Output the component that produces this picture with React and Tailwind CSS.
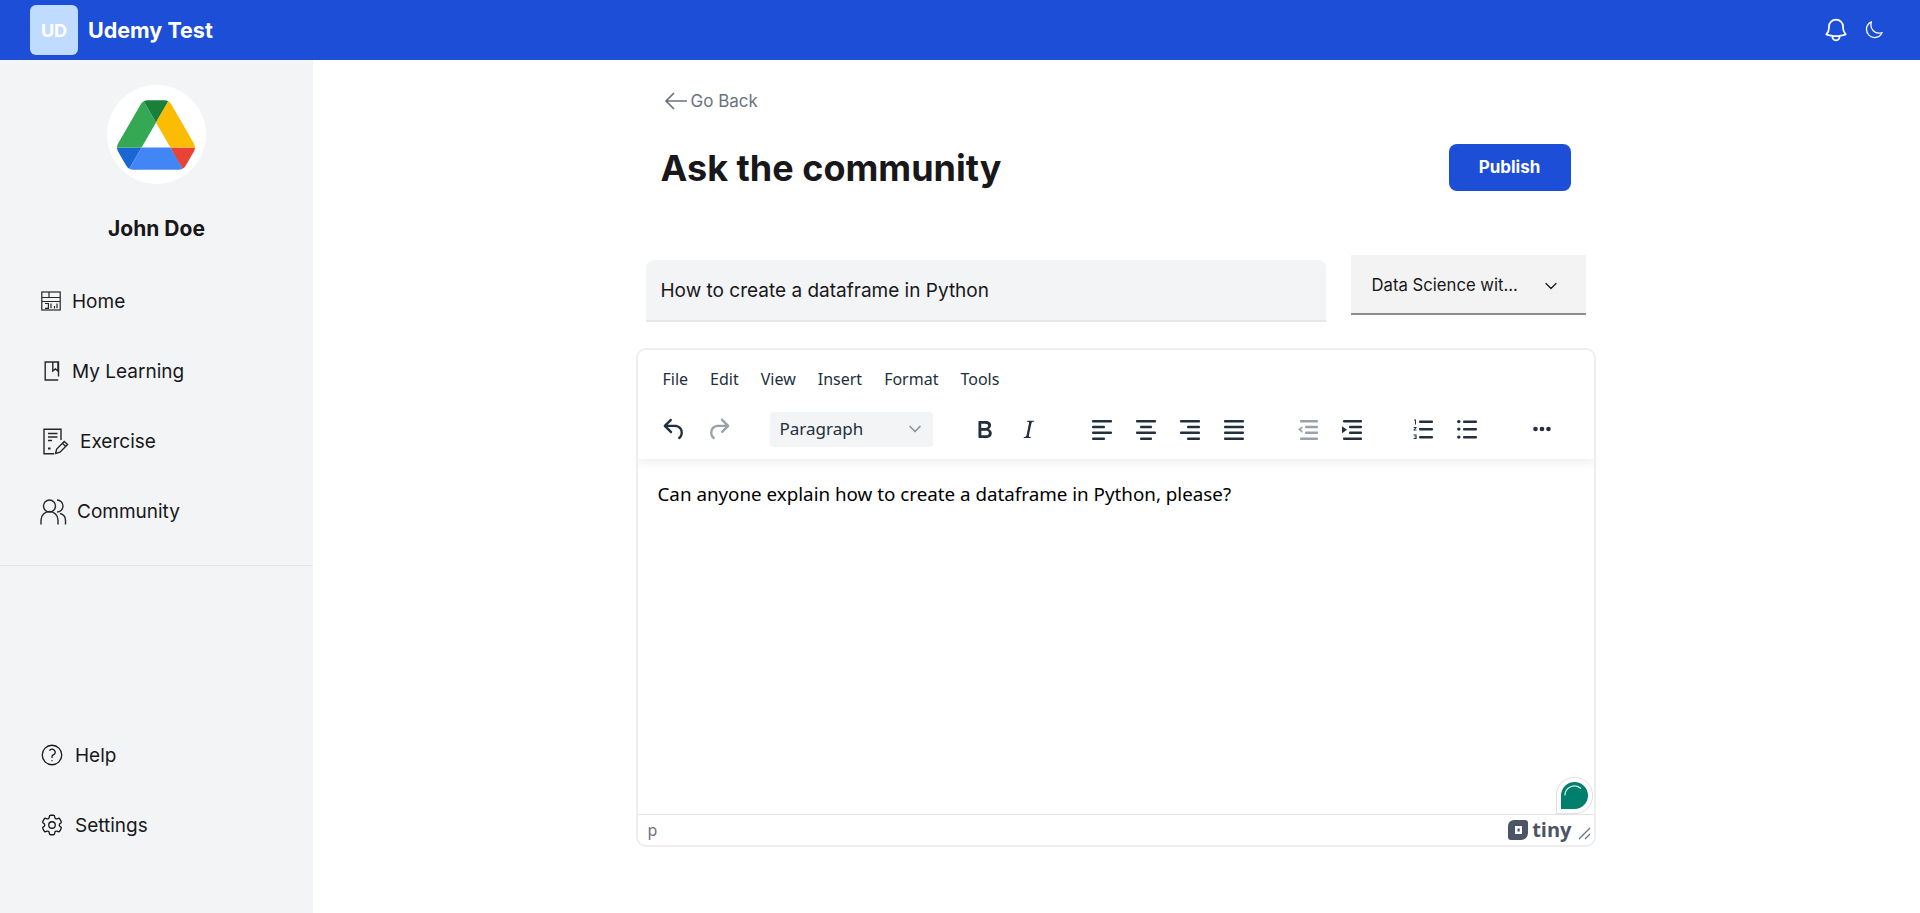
import {
  HiOutlineBell,
  HiOutlineMoon,
  HiOutlineCog6Tooth,
  HiOutlineQuestionMarkCircle,
} from 'react-icons/hi2';
import { ChevronDown } from 'lucide-react';

const Lines = ({ rows }) => (
  <svg width="24" height="24" viewBox="0 0 24 24" fill="#222f3e">
    {rows.map((r, i) => (
      <rect key={i} x={r[0]} y={3 + i * 5.8} width={r[1]} height="2.5" rx="1" />
    ))}
  </svg>
);

const Tool = ({ children }) => (
  <div className="w-[44px] h-[36px] flex items-center justify-center">{children}</div>
);

function DriveLogo() {
  return (
    <svg width="78" height="70" viewBox="0 0 87.3 78">
      <path d="m6.6 66.85 3.85 6.65c.8 1.4 1.95 2.5 3.3 3.3l13.75-23.8h-27.5c0 1.55.4 3.1 1.2 4.5z" fill="#1967d2" />
      <path d="m43.65 25-13.75-23.8c-1.35.8-2.5 1.9-3.3 3.3l-25.4 44a9.06 9.06 0 0 0 -1.2 4.5h27.5z" fill="#34a853" />
      <path d="m73.55 76.8c1.35-.8 2.5-1.9 3.3-3.3l1.6-2.75 7.65-13.25c.8-1.4 1.2-2.95 1.2-4.5h-27.502l5.852 11.5z" fill="#ea4335" />
      <path d="m43.65 25 13.75-23.8c-1.35-.8-2.9-1.2-4.5-1.2h-18.5c-1.6 0-3.15.45-4.5 1.2z" fill="#188038" />
      <path d="m59.8 53h-32.3l-13.75 23.8c1.35.8 2.9 1.2 4.5 1.2h50.8c1.6 0 3.15-.45 4.5-1.2z" fill="#4285f4" />
      <path d="m73.4 26.5-12.7-22c-.8-1.4-1.95-2.5-3.3-3.3l-13.75 23.8 16.15 28h27.45c0-1.55-.4-3.1-1.2-4.5z" fill="#fbbc04" />
    </svg>
  );
}

function HomeIcon() {
  return (
    <svg width="20" height="20" viewBox="0 0 20 20" fill="none" stroke="#27272a" strokeWidth="1.2">
      <rect x="0.8" y="1" width="18.4" height="18" />
      <path d="M0.8 6.5h18.4M8 1v5.5M1 10.5h18" />
      <path d="M4 12.5h3.4v4.8H4M10 12.5v4.8M13.5 15v2.4M16 12.5v4.8" />
    </svg>
  );
}

function BookIcon() {
  return (
    <svg width="16" height="20" viewBox="0 0 16 20" fill="none" stroke="#27272a" strokeWidth="1.4">
      <path d="M14.5 15.5V1H1.2v18h13" />
      <path d="M8.8 1v9l2.6-2 2.6 2V1" />
    </svg>
  );
}

function ExerciseIcon() {
  return (
    <svg width="26" height="27" viewBox="0 0 26 27" fill="none" stroke="#27272a" strokeWidth="1.4">
      <path d="M18 12V1.2H1v24.6h10" />
      <path d="M5 5.5h9.5M5 9h9.5M5 12.5h4" />
      <path d="M5 20.5h2.5" strokeWidth="2" />
      <path d="M12.5 25.5l1.2-4.5 7.5-7.6 3.4 3.2-7.6 7.6z" />
      <path d="M19.4 15.2l3.4 3.2" />
    </svg>
  );
}

function CommunityIcon() {
  return (
    <svg width="27" height="27" viewBox="0 0 27 27" fill="none" stroke="#27272a" strokeWidth="1.4">
      <circle cx="9.5" cy="8" r="6" />
      <path d="M17 2a6 6 0 0 1 0 12" />
      <path d="M1 26.5V22a8.5 8.5 0 0 1 17 0v4.5" />
      <path d="M20 15.5a7 7 0 0 1 5.5 6.5v4.5" />
    </svg>
  );
}

function NavItem({ icon, label, gap, pad }) {
  return (
    <div className={`h-[70px] flex items-center text-[19px] text-[#18181b] ${gap} ${pad}`}>
      {icon}
      <span className="pt-[2px]">{label}</span>
    </div>
  );
}

function Sidebar() {
  return (
    <aside className="w-[313px] shrink-0 bg-[#f3f4f6] flex flex-col">
      <div className="pt-[25px] flex flex-col items-center">
        <div className="w-[99px] h-[99px] pr-[1px] rounded-full bg-white flex items-center justify-center">
          <DriveLogo />
        </div>
        <div className="mt-[31px] text-[21px] leading-[28px] font-bold text-[#18181b]">John Doe</div>
      </div>
      <nav className="mt-[23px] pb-[19px] border-b border-[#e2e4e8]">
        <NavItem icon={<HomeIcon />} label="Home" gap="gap-[11px]" pad="pl-[41px]" />
        <NavItem icon={<span className="pl-[3px] flex"><BookIcon /></span>} label="My Learning" gap="gap-[12px]" pad="pl-[41px]" />
        <NavItem icon={<span className="pl-[3px] flex"><ExerciseIcon /></span>} label="Exercise" gap="gap-[11px]" pad="pl-[40px]" />
        <NavItem icon={<CommunityIcon />} label="Community" gap="gap-[10px]" pad="pl-[40px]" />
      </nav>
      <div className="mt-auto pb-[53px]">
        <NavItem icon={<HiOutlineQuestionMarkCircle size={26} strokeWidth={1.2} />} label="Help" gap="gap-[10px]" pad="pl-[39px]" />
        <NavItem icon={<HiOutlineCog6Tooth size={26} strokeWidth={1.2} />} label="Settings" gap="gap-[10px]" pad="pl-[39px]" />
      </div>
    </aside>
  );
}

function Toolbar() {
  return (
    <div className="flex items-center h-[36px] mt-[4px] pl-[15px] text-[#222f3e]">
      <Tool>
        <svg width="29" height="29" viewBox="0 0 24 24" fill="#222f3e"><path d="M6.4 8H12c3.7 0 6.2 2 6.8 5.1.6 2.7-.4 5.6-2.3 6.8a1 1 0 0 1-1-1.8c1.1-.6 1.8-2.7 1.4-4.6-.5-2.1-2.1-3.5-4.9-3.5H6.4l3.3 3.3a1 1 0 1 1-1.4 1.4l-5-5a1 1 0 0 1 0-1.4l5-5a1 1 0 0 1 1.4 1.4L6.4 8Z" /></svg>
      </Tool>
      <Tool>
        <svg width="29" height="29" viewBox="0 0 24 24" fill="#9aa1ab"><path d="M17.6 10H12c-2.8 0-4.4 1.4-4.9 3.5-.4 2 .3 4 1.4 4.6a1 1 0 1 1-1 1.8c-2-1.2-2.9-4.1-2.3-6.8.6-3 3-5.1 6.8-5.1h5.6l-3.3-3.3a1 1 0 1 1 1.4-1.4l5 5a1 1 0 0 1 0 1.4l-5 5a1 1 0 0 1-1.4-1.4l3.3-3.3Z" /></svg>
      </Tool>
      <div className="ml-[29px] w-[163px] h-[35px] bg-[#f3f4f6] rounded-[4px] flex items-center justify-between pl-[10px] pr-[8px] text-[17px]">
        <span>Paragraph</span>
        <ChevronDown size={20} className="text-[#8a929c]" />
      </div>
      <div className="ml-[30px] flex">
        <Tool>
          <svg width="29" height="29" viewBox="0 0 24 24" fill="#222f3e"><path d="M7.8 19c-.3 0-.5 0-.6-.2l-.2-.5V5.7c0-.2 0-.4.2-.5l.6-.2h5c1.5 0 2.7.3 3.5 1 .7.6 1.1 1.4 1.1 2.5a3 3 0 0 1-.6 1.9c-.4.6-1 1-1.6 1.2.4.1.9.3 1.3.6s.8.7 1 1.2c.4.4.5 1 .5 1.6 0 1.3-.4 2.3-1.3 3-.8.7-2.1 1-3.8 1H7.8Zm5-8.3c.6 0 1.2-.1 1.6-.5.4-.3.6-.7.6-1.3 0-1.1-.8-1.7-2.3-1.7H9.3v3.5h3.4Zm.5 6c.7 0 1.3-.1 1.7-.4.4-.4.6-.9.6-1.5s-.2-1-.7-1.4c-.4-.3-1-.4-2-.4H9.4v3.8h4Z" /></svg>
        </Tool>
        <Tool>
          <svg width="29" height="29" viewBox="0 0 24 24" fill="#222f3e"><path d="m16.7 4.7-.1.9h-.3c-.6 0-1 0-1.4.3-.3.3-.4.6-.5 1.1l-2.1 9.8v.6c0 .5.4.8 1.4.8h.2l-.2.8H8l.2-.8h.2c1.1 0 1.8-.5 2-1.5l2-9.8.1-.5c0-.6-.4-.8-1.4-.8h-.3l.2-.9h5.8Z" /></svg>
        </Tool>
      </div>
      <div className="ml-[29px] flex">
        <Tool><Lines rows={[[2, 20], [2, 13], [2, 20], [2, 13]]} /></Tool>
        <Tool><Lines rows={[[2, 20], [6, 12], [2, 20], [6, 12]]} /></Tool>
        <Tool><Lines rows={[[2, 20], [9, 13], [2, 20], [9, 13]]} /></Tool>
        <Tool><Lines rows={[[2, 20], [2, 20], [2, 20], [2, 20]]} /></Tool>
      </div>
      <div className="ml-[30px] flex">
        <Tool>
          <svg width="24" height="24" viewBox="0 0 24 24" fill="#9aa1ab">
            <rect x="4" y="3" width="18" height="2.5" rx="1" />
            <rect x="9" y="8.8" width="13" height="2.5" rx="1" />
            <rect x="9" y="14.6" width="13" height="2.5" rx="1" />
            <rect x="4" y="20.4" width="18" height="2.5" rx="1" />
            <path d="M6.5 9 2 12.5 6.5 16v-2L4.8 12.5 6.5 11Z" />
          </svg>
        </Tool>
        <Tool>
          <svg width="24" height="24" viewBox="0 0 24 24" fill="#222f3e">
            <rect x="3" y="3" width="19" height="2.5" rx="1" />
            <rect x="9" y="8.8" width="13" height="2.5" rx="1" />
            <rect x="9" y="14.6" width="13" height="2.5" rx="1" />
            <rect x="3" y="20.4" width="19" height="2.5" rx="1" />
            <path d="M2 9.2 7 12.7 2 16.2Z" />
          </svg>
        </Tool>
      </div>
      <div className="ml-[27px] flex">
        <Tool>
          <svg width="24" height="24" viewBox="0 0 24 24" fill="#222f3e">
            <rect x="8" y="3.5" width="14" height="2.5" rx="1" />
            <rect x="8" y="11" width="14" height="2.5" rx="1" />
            <rect x="8" y="19" width="14" height="2.5" rx="1" />
            <path d="M3 2.5h2v5H4V3.6H3ZM2.6 10h3v1.1l-1.7 1.6h1.7v.9h-3v-1l1.7-1.6H2.6ZM2.6 17.5h3v4.4h-3V21h2v-.8H3.4v-.8h1.2v-1H2.6Z" />
          </svg>
        </Tool>
        <Tool>
          <svg width="24" height="24" viewBox="0 0 24 24" fill="#222f3e">
            <rect x="8" y="3.5" width="14" height="2.5" rx="1" />
            <rect x="8" y="11" width="14" height="2.5" rx="1" />
            <rect x="8" y="19" width="14" height="2.5" rx="1" />
            <circle cx="3.8" cy="4.6" r="1.7" />
            <circle cx="3.8" cy="12.1" r="1.7" />
            <circle cx="3.8" cy="20.1" r="1.7" />
          </svg>
        </Tool>
      </div>
      <div className="ml-[31px]">
        <Tool>
          <svg width="24" height="24" viewBox="0 0 24 24" fill="#222f3e">
            <circle cx="5.5" cy="12" r="2.3" />
            <circle cx="12" cy="12" r="2.3" />
            <circle cx="18.5" cy="12" r="2.3" />
          </svg>
        </Tool>
      </div>
    </div>
  );
}

function Editor() {
  return (
    <div className="relative w-[960px] h-[499px] mt-[26px] -ml-[1px] border-2 border-[#eeeeee] rounded-[10px] flex flex-col overflow-hidden font-['Noto_Sans',sans-serif]">
      <div className="shrink-0 h-[109px] bg-white shadow-[0_4px_8px_rgba(34,47,62,0.08)] z-10">
        <div className="flex items-center h-[57px] pl-[25px] gap-[22px] text-[16px] text-[#222f3e]">
          <span>File</span>
          <span>Edit</span>
          <span>View</span>
          <span>Insert</span>
          <span>Format</span>
          <span>Tools</span>
        </div>
        <Toolbar />
      </div>
      <div className="flex-1 pt-[21px] pl-[20px] text-[18.8px] leading-[28px] text-black">
        Can anyone explain how to create a dataframe in Python, please?
      </div>
      <div className="shrink-0 h-[31px] border-t border-[#e2e4e8] flex items-center justify-between pl-[10px] pr-[2px]">
        <span className="text-[16px] text-[#6b7280]">p</span>
        <div className="flex items-center gap-[3px]">
          <svg width="22" height="22" viewBox="0 0 22 22" fill="#4b5563">
            <path fillRule="evenodd" d="M7 1h11a3 3 0 0 1 3 3v10a7 7 0 0 1-7 7H4a3 3 0 0 1-3-3V7a6 6 0 0 1 6-6Zm1 6v8h7V7Zm2.5 2.5h2.2v3h-2.2Z" />
          </svg>
          <span className="text-[20px] leading-none font-bold text-[#4b5563] font-['Open_Sans',sans-serif]">tiny</span>
          <svg width="16" height="16" viewBox="0 0 16 16" stroke="#6b7280" strokeWidth="1.3" className="ml-[1px] mt-[6px]">
            <path d="M3 14 14 3M9 14l5-5" />
          </svg>
        </div>
      </div>
      <div className="absolute right-[1px] bottom-[31px] w-[37px] h-[37px] rounded-t-[18px] rounded-br-[18px] bg-white border border-[#dcdfe4] flex items-center justify-center z-20">
        <svg width="27" height="27" viewBox="0 0 27 27">
          <path d="M13.5 0A13.5 13.5 0 0 1 13.5 27H0V13.5A13.5 13.5 0 0 1 13.5 0Z" fill="#007f6c" />
          <path d="M4 13.5A9.5 9.5 0 0 1 20 6.5" fill="none" stroke="#ffffff" strokeOpacity="0.85" strokeWidth="1.2" />
        </svg>
      </div>
    </div>
  );
}

export default function App() {
  return (
    <div className="h-screen flex flex-col bg-white font-['Inter',sans-serif]">
      <header className="h-[60px] shrink-0 bg-[#1d4ed8] flex items-center justify-between pl-[30px] pr-[36px]">
        <div className="flex items-center gap-[10px]">
          <div className="w-[48px] h-[50px] rounded-[6px] bg-[#bfdbfe] flex items-center justify-center text-white font-bold text-[18px]">UD</div>
          <span className="text-white font-bold text-[21.5px]">Udemy Test</span>
        </div>
        <div className="flex items-center gap-[14px] text-white">
          <HiOutlineBell size={28} />
          <HiOutlineMoon size={20} />
        </div>
      </header>
      <div className="flex-1 flex min-h-0">
        <Sidebar />
        <main className="flex-1 min-w-0">
          <div className="w-[960px] mx-auto">
            <div className="flex items-center pl-[27px] pt-[27px] text-[#6b7280]">
              <svg width="24" height="20" viewBox="0 0 24 20" fill="none" stroke="currentColor" strokeWidth="1.7">
                <path d="M23 10H2M10 2l-8 8 8 8" />
              </svg>
              <span className="text-[17px] leading-[28px] ml-[3px]">Go Back</span>
            </div>
            <div className="flex items-start justify-between h-[60px] pl-[24px] pr-[26px] mt-[22px]">
              <h1 className="mt-[1px] text-[36px] leading-[60px] font-bold text-[#18181b]">Ask the community</h1>
              <button className="mt-[7px] pt-[1px] w-[122px] h-[47px] rounded-[8px] bg-[#1d4ed8] text-white font-bold text-[17px]">Publish</button>
            </div>
            <div className="flex items-start mt-[58px]">
              <div className="w-[680px] h-[62px] ml-[9px] mt-[5px] pt-[3px] rounded-t-[8px] bg-[#f3f4f6] border-b-2 border-[#e5e7eb] flex items-center pl-[15px] text-[19px] text-[#18181b]">
                How to create a dataframe in Python
              </div>
              <div className="w-[235px] h-[60px] ml-[25px] pt-[3px] bg-[#f3f3f4] border-b-2 border-[#8d8d8d] flex items-center justify-between pl-[21px] pr-[25px] text-[16.7px] text-[#18181b]">
                <span>Data Science wit...</span>
                <ChevronDown size={20} strokeWidth={1.5} />
              </div>
            </div>
            <Editor />
          </div>
        </main>
      </div>
    </div>
  );
}
